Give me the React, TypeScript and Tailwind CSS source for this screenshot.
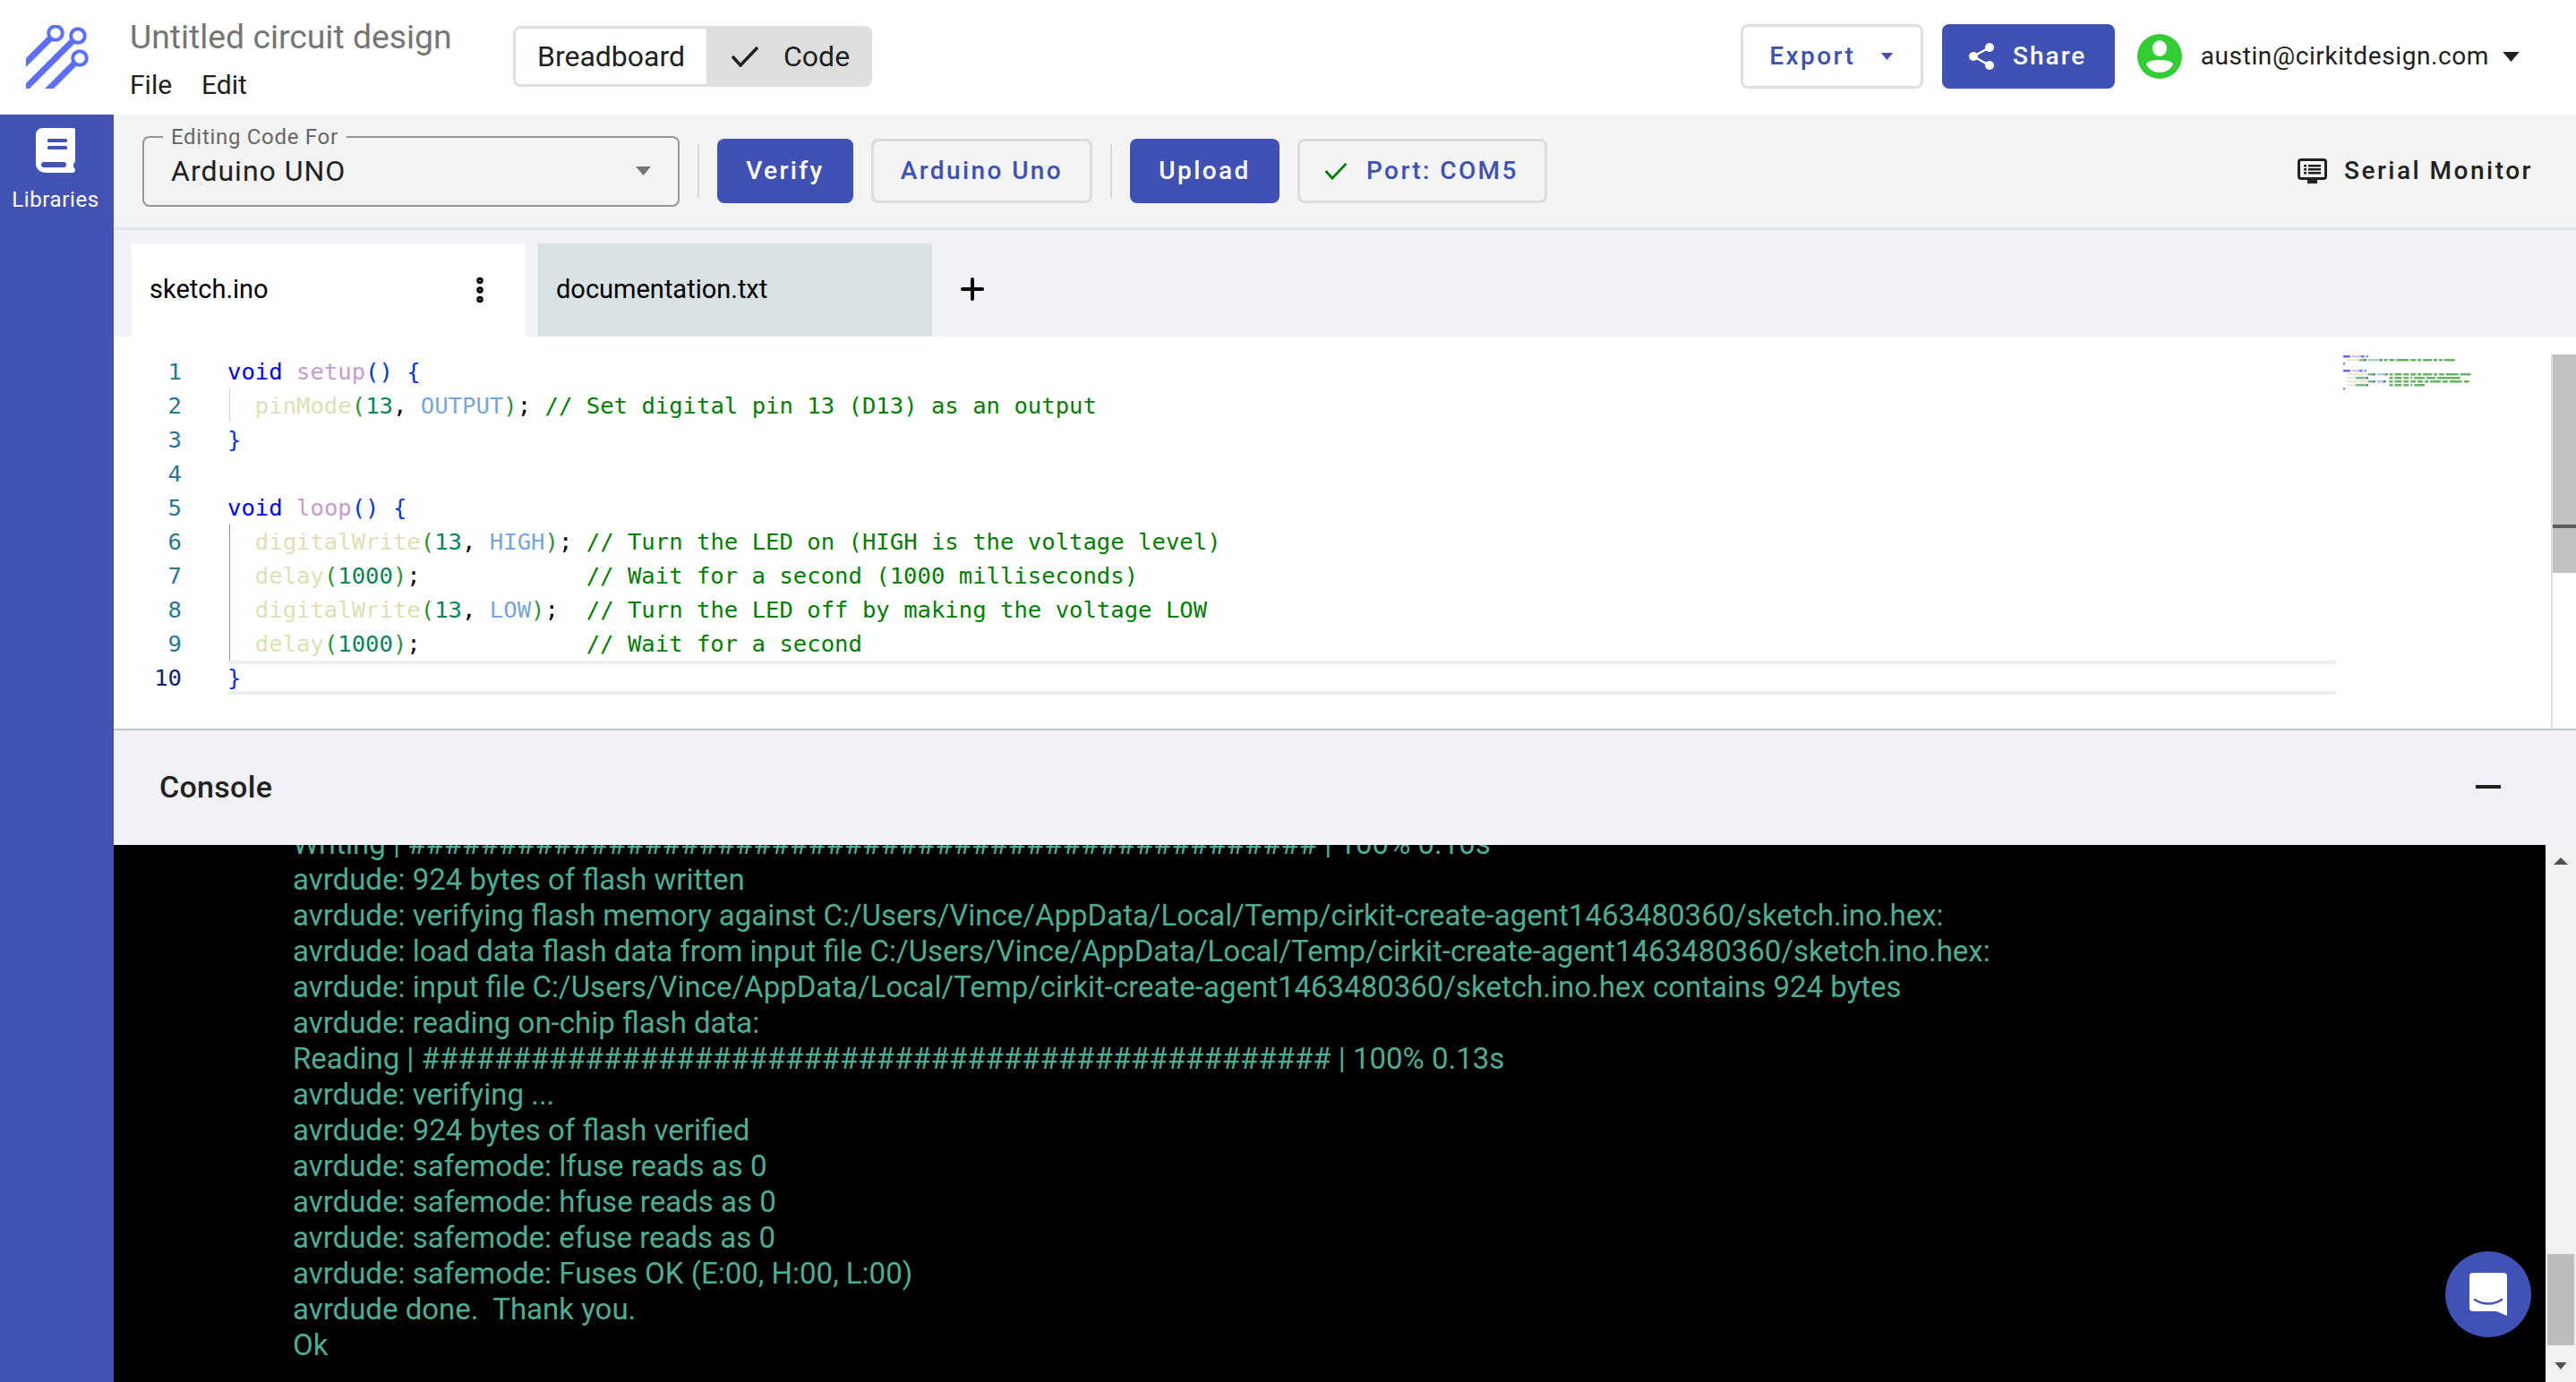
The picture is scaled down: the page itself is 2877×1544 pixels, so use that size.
import { MoreVertical, Plus } from "lucide-react";

const BLUE = "#0431fa";
const GREEN = "#319331";
const NUM = "#098658";
const FN = "#dfdfb4";
const KW = "#0000ff";
const DEF = "#c79ccb";
const CONST = "#75a7d8";
const CMT = "#008000";
const INK = "#000000";

type Token = [string, string];

const code: { tokens: Token[]; guide?: string }[] = [
  { tokens: [["void", KW], [" ", INK], ["setup", DEF], ["()", BLUE], [" ", INK], ["{", BLUE]] },
  {
    guide: "bg-[#d3d3d3]",
    tokens: [["  ", INK], ["pinMode", FN], ["(", GREEN], ["13", NUM], [",", INK], [" ", INK], ["OUTPUT", CONST], [")", GREEN], [";", INK], [" ", INK], ["// Set digital pin 13 (D13) as an output", CMT]],
  },
  { tokens: [["}", BLUE]] },
  { tokens: [] },
  { tokens: [["void", KW], [" ", INK], ["loop", DEF], ["()", BLUE], [" ", INK], ["{", BLUE]] },
  {
    guide: "bg-[#939393]",
    tokens: [["  ", INK], ["digitalWrite", FN], ["(", GREEN], ["13", NUM], [",", INK], [" ", INK], ["HIGH", CONST], [")", GREEN], [";", INK], [" ", INK], ["// Turn the LED on (HIGH is the voltage level)", CMT]],
  },
  {
    guide: "bg-[#939393]",
    tokens: [["  ", INK], ["delay", FN], ["(", GREEN], ["1000", NUM], [")", GREEN], [";", INK], ["            ", INK], ["// Wait for a second (1000 milliseconds)", CMT]],
  },
  {
    guide: "bg-[#939393]",
    tokens: [["  ", INK], ["digitalWrite", FN], ["(", GREEN], ["13", NUM], [",", INK], [" ", INK], ["LOW", CONST], [")", GREEN], [";", INK], ["  ", INK], ["// Turn the LED off by making the voltage LOW", CMT]],
  },
  {
    guide: "bg-[#939393]",
    tokens: [["  ", INK], ["delay", FN], ["(", GREEN], ["1000", NUM], [")", GREEN], [";", INK], ["            ", INK], ["// Wait for a second", CMT]],
  },
  { tokens: [["}", BLUE]] },
];

const hashes = "#".repeat(50);
const consoleLines = [
  `Writing | ${hashes} | 100% 0.10s`,
  "avrdude: 924 bytes of flash written",
  "avrdude: verifying flash memory against C:/Users/Vince/AppData/Local/Temp/cirkit-create-agent1463480360/sketch.ino.hex:",
  "avrdude: load data flash data from input file C:/Users/Vince/AppData/Local/Temp/cirkit-create-agent1463480360/sketch.ino.hex:",
  "avrdude: input file C:/Users/Vince/AppData/Local/Temp/cirkit-create-agent1463480360/sketch.ino.hex contains 924 bytes",
  "avrdude: reading on-chip flash data:",
  `Reading | ${hashes} | 100% 0.13s`,
  "avrdude: verifying ...",
  "avrdude: 924 bytes of flash verified",
  "avrdude: safemode: lfuse reads as 0",
  "avrdude: safemode: hfuse reads as 0",
  "avrdude: safemode: efuse reads as 0",
  "avrdude: safemode: Fuses OK (E:00, H:00, L:00)",
  "avrdude done.  Thank you.",
  "Ok",
];

function Logo() {
  return (
    <svg width="71" height="71" viewBox="29 28 71 71" fill="none" stroke="#5c6ffb">
      <path d="M56 43 L20 79" strokeWidth="7" />
      <path d="M81 46 L20 107" strokeWidth="7" />
      <path d="M83 71 L45 109" strokeWidth="7" />
      <circle cx="62" cy="37" r="7.8" strokeWidth="4" fill="#fff" />
      <circle cx="87" cy="40" r="7.8" strokeWidth="4" fill="#fff" />
      <circle cx="89" cy="65" r="7.8" strokeWidth="4" fill="#fff" />
    </svg>
  );
}

function BookIcon() {
  return (
    <svg width="44" height="50" viewBox="0 0 44 50">
      <path d="M8 0H42a2 2 0 0 1 2 2V37c0 1-1 1.500-1.500 2.500-.8 1.500-.8 3 0 4.500.5 1 1.500 1.500 1.500 2.500 0 2-1 3.500-3 3.500H12C5 50 0 46 0 40V8C0 3 3 0 8 0Z" fill="#fff" />
      <rect x="13" y="12" width="22" height="4" rx="1.500" fill="#4252b5" />
      <rect x="13" y="20" width="22" height="4" rx="1.500" fill="#4252b5" />
      <rect x="6" y="38" width="28" height="6" rx="3" fill="#4252b5" />
    </svg>
  );
}

function ShareIcon() {
  return (
    <svg width="30" height="30" viewBox="0 0 30 30" fill="#fff">
      <circle cx="24" cy="5" r="5" />
      <circle cx="6" cy="15" r="5" />
      <circle cx="24" cy="25" r="5" />
      <path d="M24 5 6 15l18 10" fill="none" stroke="#fff" strokeWidth="2.500" />
    </svg>
  );
}

function Avatar() {
  return (
    <svg width="50" height="50" viewBox="0 0 50 50">
      <circle cx="25" cy="25" r="25" fill="#32cd32" />
      <ellipse cx="25" cy="16" rx="8" ry="9" fill="#fff" />
      <path d="M25 29c8 0 15 2 15 5-3 6-9 9-15 9s-12-3-15-9c0-3 7-5 15-5Z" fill="#fff" />
    </svg>
  );
}

function MonitorIcon() {
  return (
    <svg width="33" height="28" viewBox="0 0 33 28">
      <rect x="1.500" y="1.500" width="30" height="21" rx="2.500" fill="none" stroke="#212121" strokeWidth="3" />
      <rect x="11" y="23" width="11" height="5" fill="#212121" />
      <rect x="7" y="7" width="3" height="2.500" fill="#212121" />
      <rect x="12" y="7" width="14" height="2.500" fill="#212121" />
      <rect x="7" y="11" width="3" height="2.500" fill="#212121" />
      <rect x="12" y="11" width="14" height="2.500" fill="#212121" />
      <rect x="7" y="15" width="3" height="2.500" fill="#212121" />
      <rect x="12" y="15" width="14" height="2.500" fill="#212121" />
    </svg>
  );
}

function Check({ color, width, height }: { color: string; width: number; height: number }) {
  return (
    <svg width={width} height={height} viewBox="0 0 32 24" fill="none" stroke={color} strokeWidth="3.500">
      <path d="M2 12 11 22 30 2" />
    </svg>
  );
}

function Caret({ color, width, height }: { color: string; width: number; height: number }) {
  return (
    <svg width={width} height={height} viewBox="0 0 10 6">
      <path d="M0 0h10L5 6Z" fill={color} />
    </svg>
  );
}

function Minimap() {
  const rects: { x: number; y: number; w: number; c: string }[] = [];
  code.forEach((line, i) => {
    let col = 0;
    line.tokens.forEach(([text, color]) => {
      const words = text.matchAll(/\S+/g);
      for (const m of words) {
        rects.push({ x: (col + (m.index ?? 0)) * 1.98, y: i * 4, w: m[0].length * 1.98, c: color });
      }
      col += text.length;
    });
  });
  return (
    <svg width="150" height="40" viewBox="0 0 150 40" className="absolute left-[2490px] top-[20px]">
      {rects.map((r, i) => (
        <rect key={i} x={r.x} y={r.y + 1} width={r.w} height="2.500" fill={r.c} opacity="0.6" />
      ))}
    </svg>
  );
}

function CodeRow({ n, tokens, guide, active }: { n: number; tokens: Token[]; guide?: string; active: boolean }) {
  return (
    <div className="flex h-[38px] leading-[38px]">
      <div className={`w-[76px] text-right ${active ? "text-[#0b216f]" : "text-[#237893]"}`}>{n}</div>
      <div
        className={`relative ml-[51px] h-[38px] w-[2355px] whitespace-pre ${active ? "border-y-4 border-[#eeeeee] leading-[30px]" : ""}`}
      >
        {guide && <span className={`absolute left-[2px] top-0 h-[38px] w-px ${guide}`} />}
        {tokens.map(([text, color], i) => (
          <span key={i} style={{ color }}>
            {text}
          </span>
        ))}
      </div>
    </div>
  );
}

export default function App() {
  return (
    <div className="flex h-[1544px] w-[2877px] flex-col overflow-hidden bg-white font-['Roboto',sans-serif] text-[#212121]">
      {/* top bar */}
      <header className="flex h-[128px] items-center pb-[2px]">
        <div className="w-[145px] pl-[29px]">
          <Logo />
        </div>
        <div className="flex w-[428px] flex-col pt-[5px]">
          <div className="text-[37.300px] leading-[44px] text-[#757575]">Untitled circuit design</div>
          <div className="mt-[15px] flex gap-[33px] text-[30px] leading-[34px]">
            <span>File</span>
            <span>Edit</span>
          </div>
        </div>
        <div className="flex h-[68px] w-[401px] overflow-hidden rounded-[8px] border-[3px] border-[#e0e0e0] text-[32px]">
          <div className="flex w-[213px] items-center justify-center bg-white">Breadboard</div>
          <div className="flex flex-1 items-center gap-[27px] bg-[#dedede] pl-[27px]">
            <Check color="#212121" width={32} height={24} />
            <span>Code</span>
          </div>
        </div>
        <div className="ml-auto flex items-center pr-[63px]">
          <button className="flex h-[72px] w-[204px] items-center justify-center gap-[28px] rounded-[8px] border-[3px] border-[#e0e0e0] text-[28px] font-medium tracking-[2.400px] text-[#3f51b5]">
            Export
            <Caret color="#3f51b5" width={15} height={8} />
          </button>
          <button className="ml-[21px] flex h-[72px] w-[193px] items-center justify-center gap-[20px] rounded-[8px] bg-[#3f51b5] pr-[2px] text-[28px] font-medium tracking-[2px] text-white">
            <ShareIcon />
            Share
          </button>
          <div className="ml-[25px]">
            <Avatar />
          </div>
          <span className="ml-[21px] text-[28px] tracking-[0.600px]">austin@cirkitdesign.com</span>
          <div className="ml-[15px]">
            <Caret color="#212121" width={19} height={11} />
          </div>
        </div>
      </header>

      <div className="flex min-h-0 flex-1">
        {/* left rail */}
        <aside className="flex w-[127px] flex-col items-center bg-[#4252b5] pr-[3px] pt-[15px] text-white">
          <BookIcon />
          <span className="mt-[15px] text-[24px] leading-[30px] tracking-[0.600px]">Libraries</span>
        </aside>

        <main className="relative flex min-w-0 flex-1 flex-col">
          {/* toolbar */}
          <div className="flex h-[129px] items-center border-b-[3px] border-[#dfe4e8] bg-[#f4f4f4] pl-[32px] pr-[48px]">
            <div className="relative flex h-[79px] w-[600px] items-center justify-between rounded-[8px] border-2 border-[#979797] pl-[30px] pr-[29px] text-[32px] tracking-[1px]">
              <span className="absolute left-[21px] top-[-13px] bg-[#f4f4f4] px-[9px] text-[24px] leading-[24px] tracking-[0.700px] text-[#666666]">
                Editing Code For
              </span>
              Arduino UNO
              <Caret color="#757575" width={19} height={10} />
            </div>
            <div className="ml-[20px] h-[60px] w-[2px] bg-[#d8d8d8]" />
            <button className="ml-[20px] h-[72px] w-[152px] rounded-[8px] bg-[#3f51b5] text-[28px] font-medium tracking-[2.400px] text-white">
              Verify
            </button>
            <button className="ml-[20px] h-[72px] w-[247px] rounded-[8px] border-[3px] border-[#dcdcdc] text-[28px] font-medium tracking-[2.400px] text-[#3f51b5]">
              Arduino Uno
            </button>
            <div className="ml-[20px] h-[60px] w-[2px] bg-[#d8d8d8]" />
            <button className="ml-[20px] h-[72px] w-[167px] rounded-[8px] bg-[#3f51b5] text-[28px] font-medium tracking-[2.400px] text-white">
              Upload
            </button>
            <button className="ml-[20px] flex h-[72px] w-[279px] items-center gap-[21px] rounded-[8px] border-[3px] border-[#dcdcdc] pl-[27px] text-[28px] font-medium tracking-[2.400px] text-[#3f51b5]">
              <Check color="#008000" width={26} height={20} />
              Port: COM5
            </button>
            <div className="ml-auto flex items-center gap-[19px] text-[28px] font-medium tracking-[2.500px]">
              <MonitorIcon />
              Serial Monitor
            </div>
          </div>

          {/* file tabs */}
          <div className="flex h-[119px] items-end bg-[#f0f2f7] pl-[20px] text-[29px] text-black">
            <div className="flex h-[104px] w-[440px] items-center justify-between bg-white pl-[20px] pr-[35px]">
              sketch.ino
              <MoreVertical size={36} strokeWidth={3} className="mr-[-2px]" />
            </div>
            <div className="ml-[14px] flex h-[104px] w-[440px] items-center bg-[#d9e2e3] pl-[20px]">
              documentation.txt
            </div>
            <div className="ml-[26px] flex h-[104px] items-center pb-[2px]">
              <Plus size={38} strokeWidth={2.500} />
            </div>
          </div>

          {/* editor */}
          <div className="relative h-[438px] bg-white pt-[20px] font-['DejaVu_Sans_Mono',monospace] text-[25.600px]">
            {code.map((line, i) => (
              <CodeRow key={i} n={i + 1} tokens={line.tokens} guide={line.guide} active={i === 9} />
            ))}
            <Minimap />
            <div className="absolute right-0 top-[20px] bottom-0 w-[28px] border-l-2 border-[#dddddd]">
              <div className="h-[244px] bg-[#c1c1c1] pt-[190px]">
                <div className="h-[4px] bg-[#5a5a5a]" />
              </div>
            </div>
          </div>

          {/* console */}
          <div className="flex h-[130px] items-center justify-between border-t-2 border-[#b9c8c8] bg-[#f0f2f7] pb-[2px] pl-[51px] pr-[84px]">
            <span className="text-[34px] font-medium tracking-[0.300px]">Console</span>
            <div className="h-[4px] w-[28px] bg-[#212121]" />
          </div>
          <div className="flex h-[600px]">
            <div className="flex min-w-0 flex-1 flex-col justify-end overflow-hidden bg-black pb-[21px] pl-[200px] text-[33px] leading-[40px] text-[#4cae93]">
              {consoleLines.map((line, i) => (
                <div key={i} className="shrink-0 whitespace-pre">
                  {line}
                </div>
              ))}
            </div>
            <div className="flex w-[34px] flex-col items-center justify-between bg-[#f1f1f1] pb-[14px] pt-[14px]">
              <svg width="16" height="8" viewBox="0 0 16 8">
                <path d="M8 0l8 8H0Z" fill="#505050" />
              </svg>
              <div className="mt-[416px] h-[102px] w-[30px] bg-[#bcbcbc]" />
              <Caret color="#505050" width={16} height={8} />
            </div>
          </div>

          {/* chat launcher */}
          <button className="absolute bottom-[50px] right-[50px] flex h-[96px] w-[96px] items-center justify-center rounded-full bg-[#4052b5]">
            <svg width="42" height="48" viewBox="0 0 42 48">
              <path d="M4 0h34a4 4 0 0 1 4 4v44l-12-5H4a4 4 0 0 1-4-4V4a4 4 0 0 1 4-4Z" fill="#fff" />
              <path d="M6 30c9 6 21 6 30 0" fill="none" stroke="#4052b5" strokeWidth="2.500" strokeLinecap="round" />
            </svg>
          </button>
        </main>
      </div>
    </div>
  );
}
